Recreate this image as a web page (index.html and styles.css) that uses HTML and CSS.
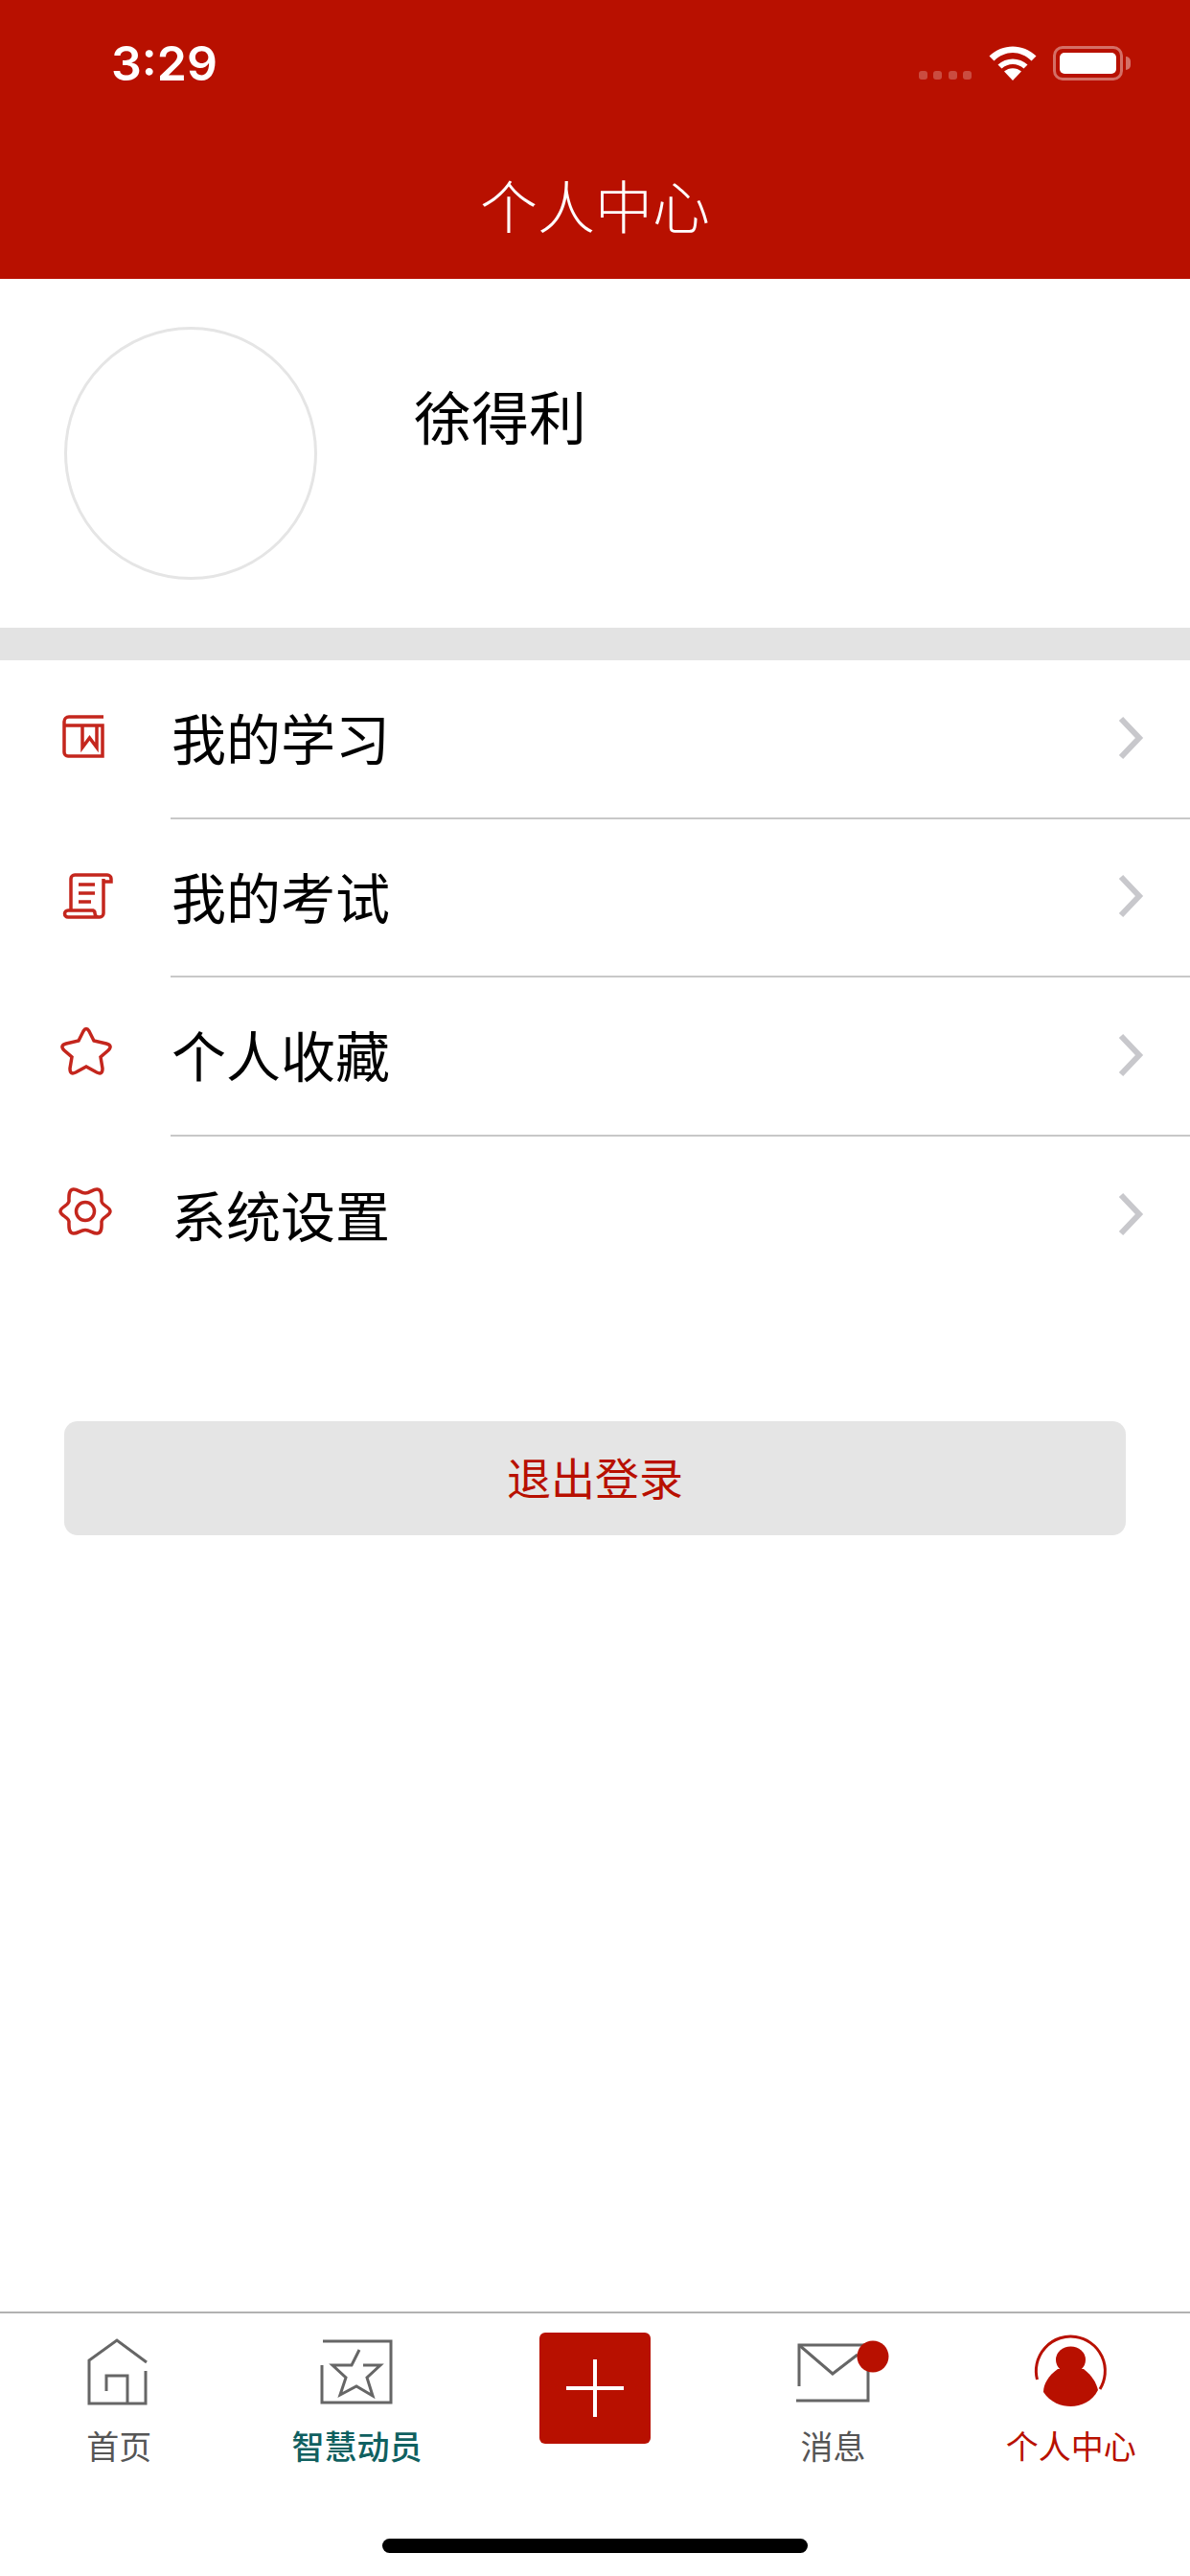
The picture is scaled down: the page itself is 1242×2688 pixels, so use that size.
FILE: index.html
```html
<!DOCTYPE html>
<html lang="zh-CN">
<head>
  <meta charset="UTF-8">
  <meta name="viewport" content="width=device-width, initial-scale=1.0">
  <title>个人中心</title>
  <link rel="stylesheet" href="styles.css">
</head>
<body>
  <div class="app">
    <header class="header">
      <div class="status-bar">
        <span class="time">3:29</span>
        <div class="status-icons">
          <div class="signal"><i></i><i></i><i></i><i></i></div>
          <svg class="wifi" width="50" height="36" viewBox="0 0 50 36">
            <path d="M25 36L16 26.500C21 22 29 22 34 26.500Z" fill="#fff"/>
            <path d="M9.500 19.500C18 11.500 32 11.500 40.500 19.500L36.500 23.500C30 17.500 20 17.500 13.500 23.500Z" fill="#fff"/>
            <path d="M0.500 10.500C14 -3 36 -3 49.500 10.500L44.500 15.500C33 4 17 4 5.500 15.500Z" fill="#fff"/>
          </svg>
          <div class="battery"><div class="battery-fill"></div></div>
          <div class="battery-cap"></div>
        </div>
      </div>
      <h1 class="title">个人中心</h1>
    </header>

    <section class="profile">
      <div class="avatar"></div>
      <div class="name">徐得利</div>
    </section>

    <ul class="menu">
      <li class="menu-item">
        <svg class="menu-icon" viewBox="0 0 60 60">
          <path d="M48 10H12a5 5 0 0 0-5 5v32a4 4 0 0 0 4 4h36V19H7"/>
          <path d="M26 19v23l7.500-10 7.500 10V19"/>
        </svg>
        <div class="menu-body">
          <span class="menu-label">我的学习</span>
          <svg class="chevron" viewBox="0 0 32 50"><path d="M6 5L25 25 6 45"/></svg>
        </div>
      </li>
      <li class="menu-item">
        <svg class="menu-icon" viewBox="0 0 60 60">
          <path d="M14 46V13a4 4 0 0 1 4-4h34a4 4 0 0 1 4 4v3h-8"/>
          <path d="M48 13v36a4 4 0 0 1-4 4H11a3.500 3.500 0 0 1 0-7h26a3 3 0 0 1 2 3a4 4 0 0 0 4 4"/>
          <path d="M22 19H39M22 28H39M22 37H35"/>
        </svg>
        <div class="menu-body">
          <span class="menu-label">我的考试</span>
          <svg class="chevron" viewBox="0 0 32 50"><path d="M6 5L25 25 6 45"/></svg>
        </div>
      </li>
      <li class="menu-item">
        <svg class="menu-icon" viewBox="0 0 60 60">
          <path d="M27 7Q30 2 33 7L38 17L51 20Q58 22 53 27L45 34L47 46Q47 53 41 50L30 44L19 50Q13 53 13 46L15 34L7 27Q2 22 9 20L22 17Z"/>
        </svg>
        <div class="menu-body">
          <span class="menu-label">个人收藏</span>
          <svg class="chevron" viewBox="0 0 32 50"><path d="M6 5L25 25 6 45"/></svg>
        </div>
      </li>
      <li class="menu-item">
        <svg class="menu-icon" viewBox="0 0 60 60">
          <path d="M29 10C24 10 21 5.500 16.500 6C11 6.500 12 14.500 12 18.500C11 23.500 3 24.500 3 29C3 33.500 11 34.500 12 39.500C12 43.500 11 51.500 16.500 52C21 52.500 24 48.500 29 48.500C34 48.500 37 52.500 41.500 52C47 51.500 46 43.500 46 39.500C47 34.500 55 33.500 55 29C55 24.500 47 23.500 46 18.500C46 14.500 47 6.500 41.500 6C37 5.500 34 10 29 10Z"/>
          <circle cx="29" cy="29" r="9.500"/>
        </svg>
        <div class="menu-body no-line">
          <span class="menu-label">系统设置</span>
          <svg class="chevron" viewBox="0 0 32 50"><path d="M6 5L25 25 6 45"/></svg>
        </div>
      </li>
    </ul>

    <button class="logout">退出登录</button>

    <nav class="tabbar">
      <div class="tabs">
        <div class="tab">
          <svg class="tab-icon" viewBox="0 0 100 80">
            <path d="M79 29L48 6 19 27V72H78V38"/>
            <path d="M37 59V43H59V72"/>
          </svg>
          <span class="tab-label">首页</span>
        </div>
        <div class="tab tab-study">
          <svg class="tab-icon" viewBox="0 0 100 80">
            <path d="M14 7H85V71H13V32"/>
            <path d="M52 16L44 32H24L38 45L32 63L49 54L66 64L60 45L74 32H56"/>
          </svg>
          <span class="tab-label">智慧动员</span>
        </div>
        <div class="tab">
          <div class="add-btn">
            <svg width="60" height="60" viewBox="0 0 60 60"><path d="M30 0V60M0 30H60"/></svg>
          </div>
        </div>
        <div class="tab">
          <svg class="tab-icon" viewBox="0 0 100 80">
            <path d="M15 54V11H87V69H12"/>
            <path d="M15 11L50 41L76 21"/>
            <circle class="dot" cx="92" cy="23" r="16.500"/>
          </svg>
          <span class="tab-label">消息</span>
        </div>
        <div class="tab tab-active">
          <svg class="tab-icon" viewBox="0 0 100 80">
            <path d="M14.500 47A36 36 0 1 1 80 57"/>
            <ellipse class="fill" cx="49.500" cy="26.500" rx="15.500" ry="14"/>
            <path class="fill" d="M36 36C26 43 21 52 21 60C28 71 40 75 49.500 75C60 75 72 70 78 58C76 50 72 43 63 36Z"/>
          </svg>
          <span class="tab-label">个人中心</span>
        </div>
      </div>
      <div class="home-bar"></div>
    </nav>
  </div>
</body>
</html>
```

FILE: styles.css
```css
* {
  box-sizing: border-box;
}

body {
  margin: 0;
  background-color: #fff;
  font-family: "Noto Sans CJK SC", "Noto Sans", sans-serif;
  color: #000;
}

.app {
  display: flex;
  flex-direction: column;
  width: 1242px;
  height: 2688px;
  overflow: hidden;
}

/* header */
.header {
  height: 291px;
  background-color: #b81000;
  color: #fff;
}

.status-bar {
  display: flex;
  align-items: flex-start;
  justify-content: space-between;
  height: 132px;
  padding: 48px 62px 0 116px;
}

.time {
  font-family: Inter, sans-serif;
  font-weight: 600;
  font-size: 50px;
  line-height: 36px;
}

.status-icons {
  display: flex;
  align-items: flex-end;
}

.signal {
  display: flex;
  gap: 6.500px;
  margin-right: 18px;
  margin-bottom: 1px;
}

.signal i {
  width: 9px;
  height: 9px;
  border-radius: 3px;
  background-color: rgba(255, 255, 255, 0.25);
}

.wifi {
  margin-right: 17px;
}

.battery {
  width: 73px;
  height: 36px;
  padding: 4px;
  border: 3px solid rgba(255, 255, 255, 0.4);
  border-radius: 10px;
}

.battery-fill {
  height: 100%;
  border-radius: 5px;
  background-color: #fff;
}

.battery-cap {
  width: 5px;
  height: 14px;
  margin: 0 0 11px 3px;
  border-radius: 0 5px 5px 0;
  background-color: rgba(255, 255, 255, 0.4);
}

.title {
  margin: 0;
  font-weight: 300;
  font-size: 60px;
  line-height: 161px;
  text-align: center;
}

/* profile */
.profile {
  display: flex;
  height: 364px;
  padding: 50px 67px 0;
}

.avatar {
  width: 264px;
  height: 264px;
  border: 3px solid #e5e5e5;
  border-radius: 50%;
}

.name {
  margin: 52px 0 0 101px;
  font-size: 60px;
  line-height: 80px;
}

/* menu */
.menu {
  margin: 0;
  padding: 0;
  border-top: 34px solid #e3e3e3;
  list-style: none;
}

.menu-item {
  display: flex;
  align-items: center;
  height: 165.500px;
  padding-left: 60px;
}

.menu-icon {
  flex: none;
  width: 60px;
  height: 60px;
  margin-bottom: 7px;
  fill: none;
  stroke: #c4261d;
  stroke-width: 3.500;
}

.menu-body {
  display: flex;
  flex: 1;
  align-items: center;
  justify-content: space-between;
  height: 100%;
  margin-left: 58px;
  padding-right: 46px;
  border-bottom: 2px solid #c8c8c8;
}

.menu-body.no-line {
  border-bottom: none;
}

.menu-label {
  margin: 0 0 4px 1px;
  font-size: 57px;
  line-height: 1;
}

.chevron {
  width: 32px;
  height: 50px;
  margin-bottom: 2px;
  fill: none;
  stroke: #c8c8cc;
  stroke-width: 6;
}

/* logout */
.logout {
  display: block;
  width: 1108px;
  height: 119px;
  margin: 132px 0 0 67px;
  padding-bottom: 6px;
  border: none;
  border-radius: 14px;
  background-color: #e5e5e5;
  color: #b81000;
  font-family: inherit;
  font-size: 46px;
}

/* tab bar */
.tabbar {
  margin-top: auto;
  height: 276px;
  border-top: 2px solid #b2b2b2;
}

.tabs {
  display: grid;
  grid-template-columns: repeat(5, 1fr);
  height: 235px;
  padding-top: 22px;
}

.tab {
  display: flex;
  flex-direction: column;
  align-items: center;
}

.tab-icon {
  width: 100px;
  height: 80px;
  overflow: visible;
  fill: none;
  stroke: #666;
  stroke-width: 3;
}

.tab-icon .dot {
  fill: #b81000;
  stroke: none;
}

.tab-label {
  margin-top: 16px;
  font-size: 34px;
  line-height: 40px;
  color: #555;
}

.tab-study .tab-label {
  font-weight: 500;
  color: #0f6060;
}

.tab-active .tab-label {
  color: #b81000;
}

.tab-active .tab-icon {
  stroke: #b81000;
}

.tab-active .tab-icon .fill {
  fill: #b81000;
  stroke: none;
}

.add-btn {
  display: flex;
  align-items: center;
  justify-content: center;
  width: 116px;
  height: 116px;
  margin-top: -2px;
  border-radius: 6px;
  background-color: #b81000;
}

.add-btn svg {
  stroke: #fff;
  stroke-width: 4;
}

.home-bar {
  width: 444px;
  height: 15px;
  margin: 0 auto;
  border-radius: 8px;
  background-color: #000;
}
```
